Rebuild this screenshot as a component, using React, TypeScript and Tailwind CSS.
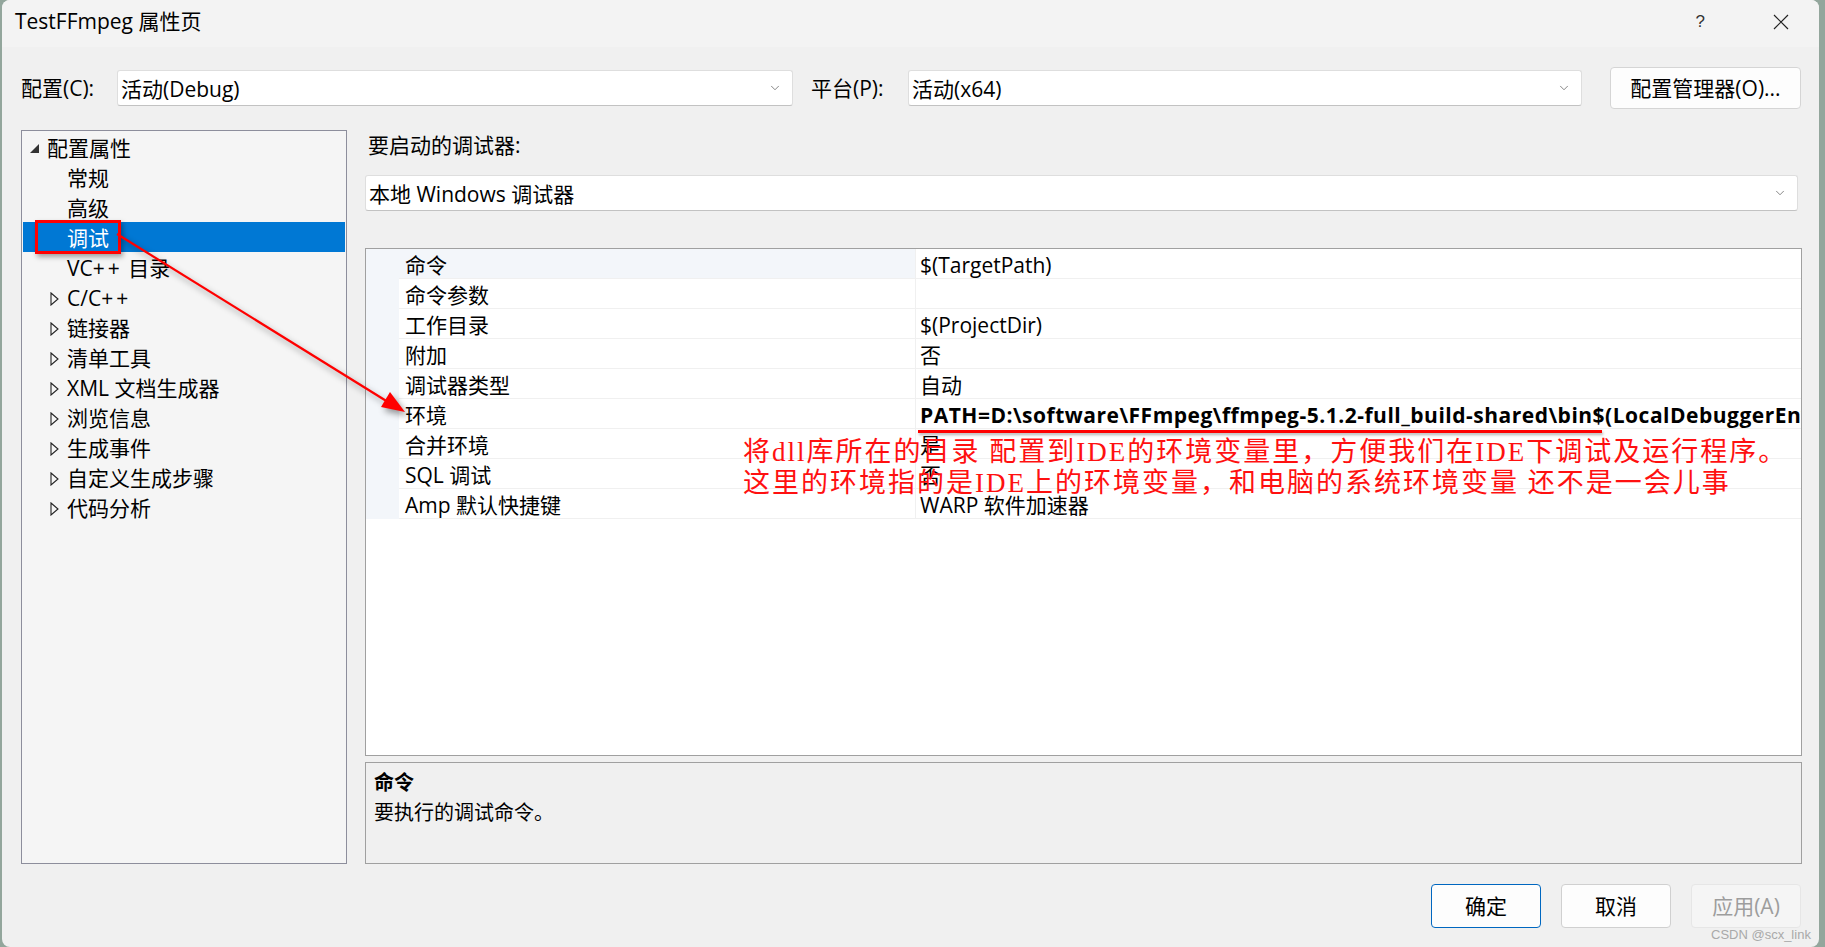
import { ChevronDown } from 'lucide-react';

const FONT = "font-['Open_Sans','Noto_Sans_CJK_SC',sans-serif]";

type TreeItem = { label: string; level: number; icon?: 'open' | 'closed'; selected?: boolean };

const tree: TreeItem[] = [
  { label: '配置属性', level: 0, icon: 'open' },
  { label: '常规', level: 1 },
  { label: '高级', level: 1 },
  { label: '调试', level: 1, selected: true },
  { label: 'VC++ 目录', level: 1 },
  { label: 'C/C++', level: 1, icon: 'closed' },
  { label: '链接器', level: 1, icon: 'closed' },
  { label: '清单工具', level: 1, icon: 'closed' },
  { label: 'XML 文档生成器', level: 1, icon: 'closed' },
  { label: '浏览信息', level: 1, icon: 'closed' },
  { label: '生成事件', level: 1, icon: 'closed' },
  { label: '自定义生成步骤', level: 1, icon: 'closed' },
  { label: '代码分析', level: 1, icon: 'closed' },
];

const props: { name: string; value: string; bold?: boolean }[] = [
  { name: '命令', value: '$(TargetPath)' },
  { name: '命令参数', value: '' },
  { name: '工作目录', value: '$(ProjectDir)' },
  { name: '附加', value: '否' },
  { name: '调试器类型', value: '自动' },
  { name: '环境', value: 'PATH=D:\\software\\FFmpeg\\ffmpeg-5.1.2-full_build-shared\\bin$(LocalDebuggerEnvironment)', bold: true },
  { name: '合并环境', value: '是' },
  { name: 'SQL 调试', value: '否' },
  { name: 'Amp 默认快捷键', value: 'WARP 软件加速器' },
];

function Combo({ text, width }: { text: string; width: string }) {
  return (
    <div className={`${width} h-[36px] bg-white border border-[#dedede] border-b-[#c2c2c2] rounded-[3px] flex items-center pl-[3px] pr-[10px]`}>
      <span className="flex-1 text-[21px] leading-[30px] pt-[2px] text-black">{text}</span>
      <ChevronDown size={14} strokeWidth={1.2} className="text-[#555]" />
    </div>
  );
}

function TreeIcon({ kind }: { kind?: 'open' | 'closed' }) {
  if (kind === 'open') {
    return (
      <svg width="17" height="12" viewBox="0 0 17 12">
        <polygon points="9,1 9,10 0,10" fill="#333" />
      </svg>
    );
  }
  if (kind === 'closed') {
    return (
      <svg width="17" height="14" viewBox="0 0 17 14">
        <polygon points="1,1 8,7 1,13" fill="none" stroke="#222" strokeWidth="1.1" />
      </svg>
    );
  }
  return <span className="w-[17px]" />;
}

// the "++" in VC++ / C/C++ is drawn with wide spacing in the dialog
function TreeLabel({ text }: { text: string }) {
  const i = text.indexOf('++');
  if (i < 0) return <span>{text}</span>;
  return (
    <span>
      {text.slice(0, i)}
      <span className="tracking-[3px]">++</span>
      {text.slice(i + 2)}
    </span>
  );
}

function Button({ children, kind }: { children: string; kind: 'primary' | 'normal' | 'disabled' }) {
  const cls =
    kind === 'primary'
      ? 'border-[#0067c0] bg-[#fdfdfd] text-black'
      : kind === 'normal'
      ? 'border-[#d0d0d0] bg-[#fdfdfd] text-black'
      : 'border-[#e6e6e6] bg-[#f5f5f5] text-[#9d9d9d]';
  return (
    <div className={`w-[110px] h-[44px] rounded-[4px] border flex items-center justify-center pt-[2px] text-[21px] ${cls}`}>
      {children}
    </div>
  );
}

export default function App() {
  return (
    <div className={`relative w-[1825px] h-[947px] bg-[#93a69c] overflow-hidden ${FONT}`}>
      <div className="ml-[2px] w-[1817px] h-[947px] bg-[#f0f0f0] rounded-[8px] overflow-hidden flex flex-col">
        {/* title bar */}
        <div className="h-[47px] bg-[#f3f3f3] flex items-center pb-[4px] pl-[13px] pr-[30px]">
          <span className="flex-1 text-[21px] text-black">TestFFmpeg 属性页</span>
          <span className="text-[17px] text-[#333] mr-[68px] font-['Liberation_Sans',sans-serif]">?</span>
          <svg width="16" height="16" viewBox="0 0 16 16">
            <path d="M1 1 L15 15 M15 1 L1 15" stroke="#222" strokeWidth="1.2" />
          </svg>
        </div>

        {/* config row */}
        <div className="mt-[20px] h-[42px] flex items-center pl-[19px]">
          <span className="w-[96px] text-[21px] pt-[2px] text-black">配置(C):</span>
          <Combo text="活动(Debug)" width="w-[676px]" />
          <span className="ml-[18px] w-[97px] text-[21px] pt-[2px] text-black">平台(P):</span>
          <Combo text="活动(x64)" width="w-[674px]" />
          <div className="ml-[28px] w-[191px] h-[42px] bg-[#fdfdfd] border border-[#d5d5d5] rounded-[4px] flex items-center justify-center pt-[2px] text-[21px] text-black">
            配置管理器(O)...
          </div>
        </div>

        {/* main */}
        <div className="mt-[21px] flex pl-[19px]">
          <div className="w-[326px] h-[734px] border border-[#8d8e9c] bg-[#f5f5f5] pt-[1px] px-[1px]">
            {tree.map((t) => (
              <div
                key={t.label}
                className={`h-[30px] flex items-center pt-[4px] text-[21px] ${t.level === 0 ? 'pl-[7px]' : 'pl-[27px]'} ${
                  t.selected ? 'bg-[#0078d4] text-white' : 'text-black'
                }`}
              >
                <TreeIcon kind={t.icon} />
                <TreeLabel text={t.label} />
              </div>
            ))}
          </div>

          <div className="ml-[18px] w-[1437px] flex flex-col">
            <div className="h-[30px] leading-[30px] text-[21px] text-black pl-[3px]">要启动的调试器:</div>
            <div className="mt-[15px]">
              <Combo text="本地 Windows 调试器" width="w-[1433px]" />
            </div>

            <div className="mt-[37px] h-[508px] border border-[#a0a0a0] bg-white overflow-hidden">
              {props.map((p, i) => (
                <div key={p.name} className="flex h-[30px]">
                  <div className="w-[33px] bg-[#f3f6fa]" />
                  <div
                    className={`w-[516px] border-b border-[#f0f0f0] pl-[6px] pt-[4px] flex items-center text-[21px] text-black ${
                      i === 0 ? 'bg-[#f3f6fa]' : ''
                    }`}
                  >
                    {p.name}
                  </div>
                  <div
                    className={`flex-1 border-b border-l border-[#f0f0f0] pl-[4px] pt-[4px] flex items-center text-[21px] text-black whitespace-nowrap overflow-hidden ${
                      p.bold ? 'font-bold tracking-[0.5px]' : ''
                    }`}
                  >
                    {p.value}
                  </div>
                </div>
              ))}
            </div>

            <div className="mt-[6px] h-[102px] border border-[#a0a0a0] bg-[#f0f0f0] pl-[8px] pt-[5px]">
              <div className="h-[30px] leading-[30px] text-[20px] font-bold text-black">命令</div>
              <div className="h-[30px] leading-[30px] text-[20px] text-black">要执行的调试命令。</div>
            </div>
          </div>
        </div>

        {/* buttons */}
        <div className="mt-[20px] flex justify-end gap-[20px] pr-[18px]">
          <Button kind="primary">确定</Button>
          <Button kind="normal">取消</Button>
          <Button kind="disabled">应用(A)</Button>
        </div>
      </div>

      {/* annotations */}
      <div className="absolute left-[35px] top-[220px] w-[86px] h-[34px] border-[3px] border-[#f00] shadow-[2px_3px_5px_rgba(0,0,0,0.35)]" />
      <svg
        className="absolute left-0 top-0 pointer-events-none drop-shadow-[3px_4px_3px_rgba(0,0,0,0.4)]"
        width="1825"
        height="947"
        viewBox="0 0 1825 947"
      >
        <line x1="117" y1="234" x2="388" y2="402" stroke="#f00" strokeWidth="2.2" />
        <polygon points="405,412 381,407 390,392" fill="#f00" />
      </svg>
      <div className="absolute left-[918px] top-[430px] w-[684px] h-[3px] bg-[#f00] shadow-[1px_2px_3px_rgba(0,0,0,0.3)]" />
      <div className="absolute left-[743px] top-[437px] text-[#ff1010] text-[27px] leading-[31px] tracking-[2px] whitespace-nowrap font-['Liberation_Serif','Noto_Sans_CJK_SC',serif]">
        <div>将dll库所在的目录 配置到IDE的环境变量里，方便我们在IDE下调试及运行程序。</div>
        <div>这里的环境指的是IDE上的环境变量，和电脑的系统环境变量 还不是一会儿事</div>
      </div>
      <div className="absolute left-[1711px] top-[925px] text-[13px] text-[#a9a9a9] font-['Liberation_Sans',sans-serif]">
        CSDN @scx_link
      </div>
    </div>
  );
}
